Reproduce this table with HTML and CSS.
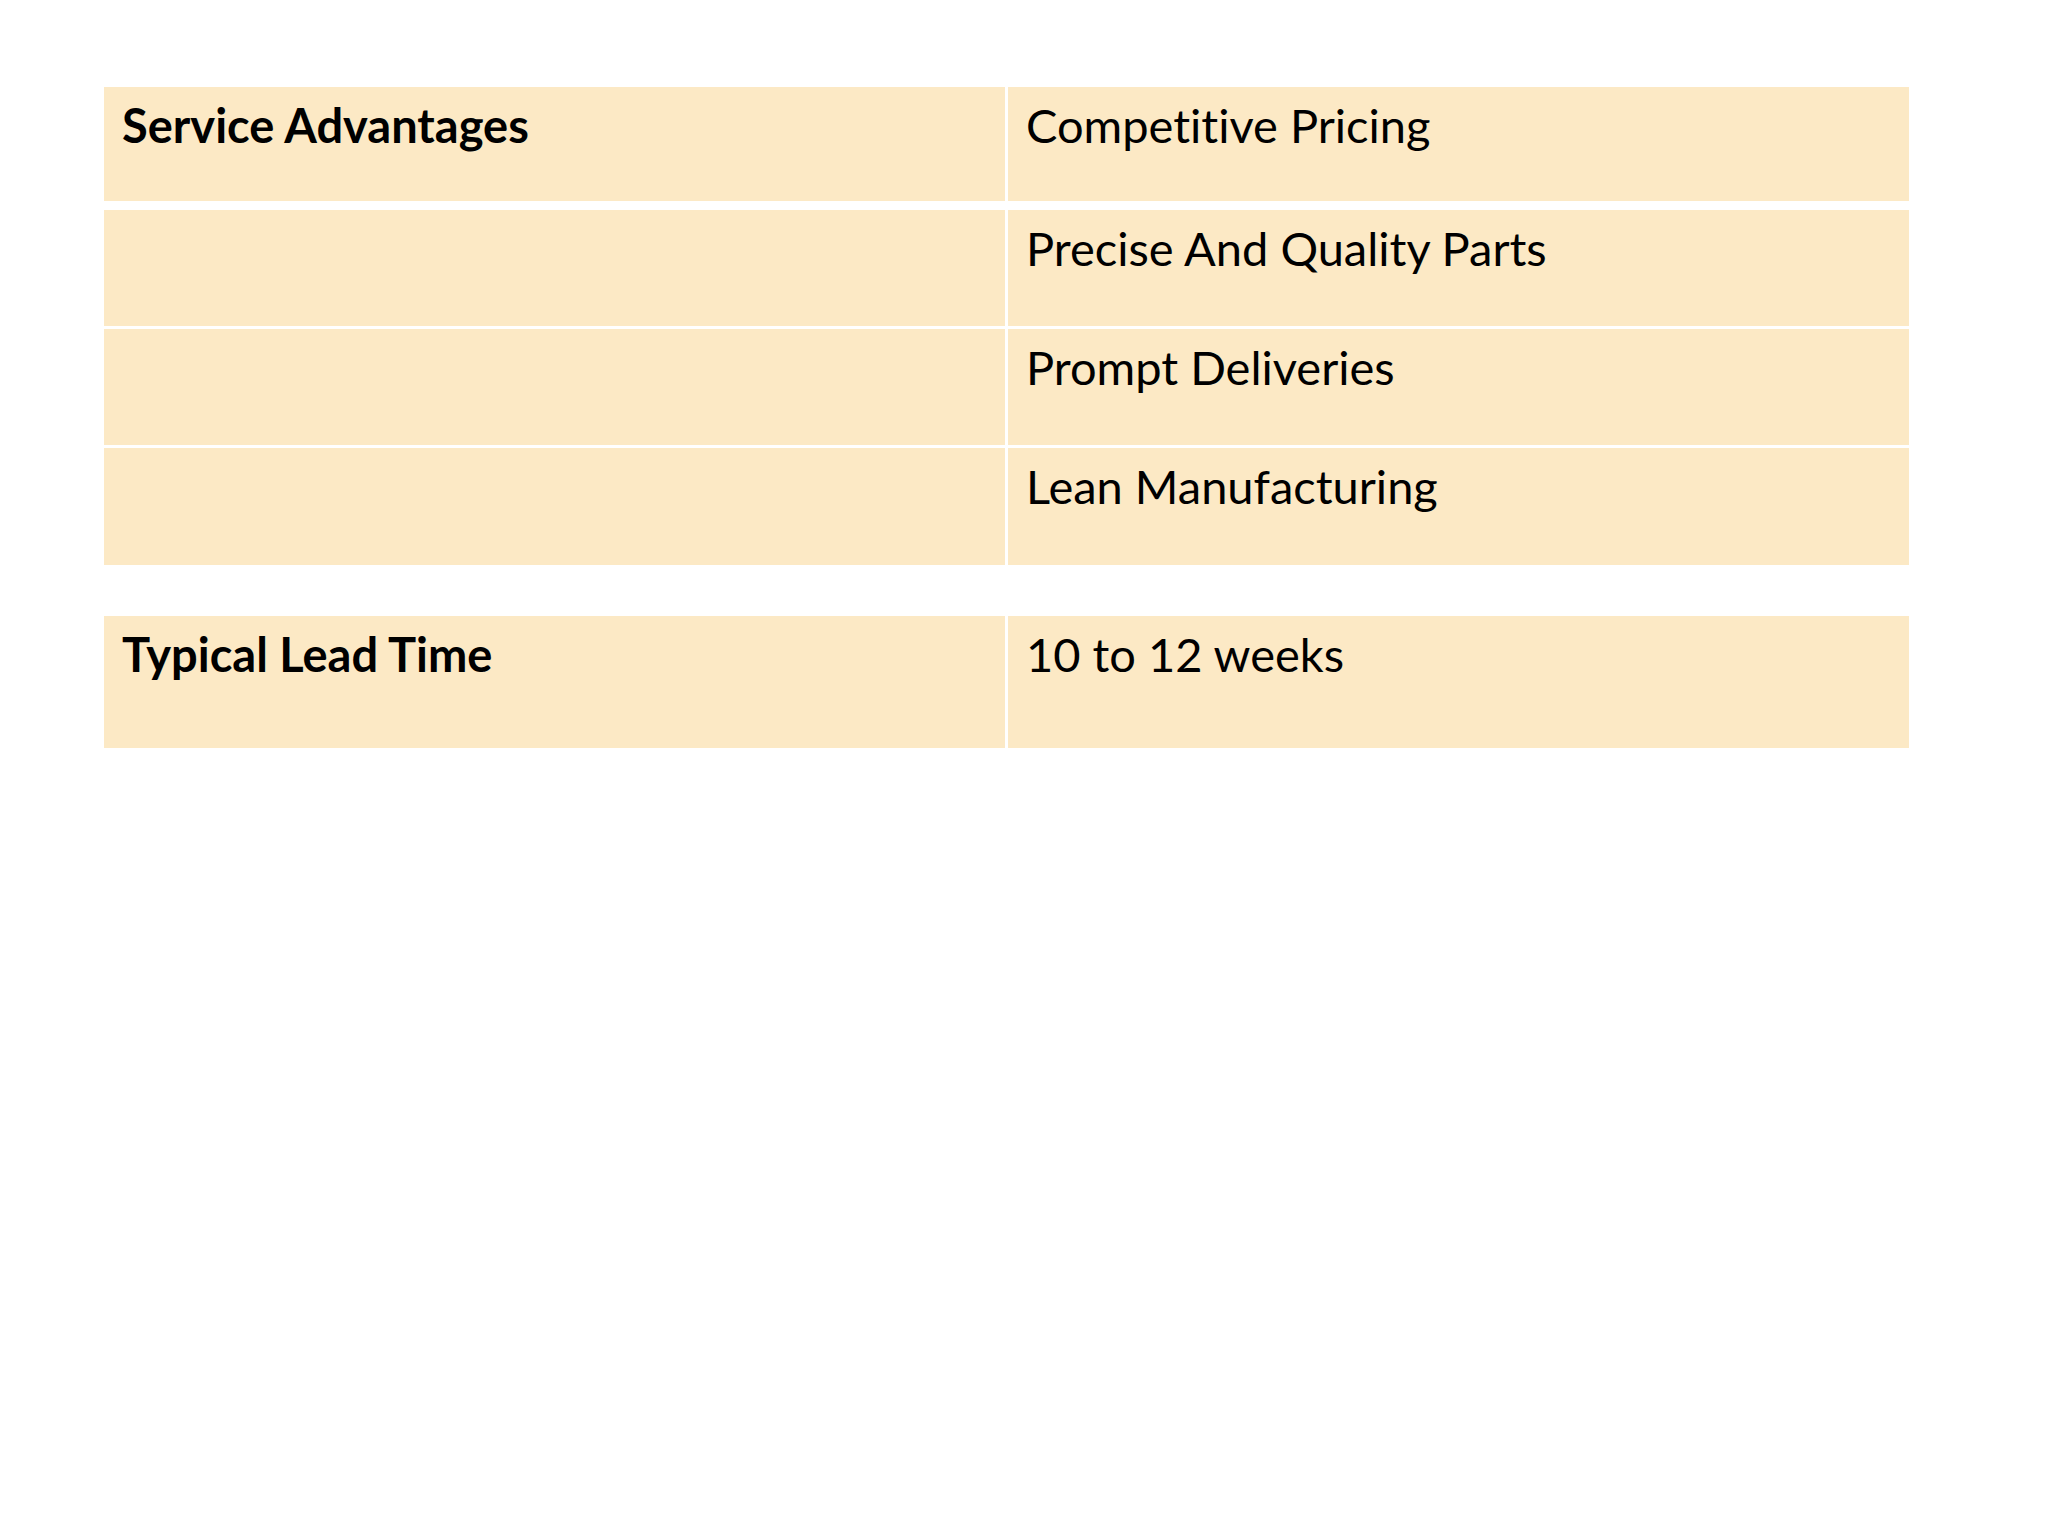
FILE: index.html
```html
<!DOCTYPE html>
<html lang="en">
<head>
<meta charset="utf-8">
<title>Service Advantages</title>
<link rel="stylesheet" href="styles.css">
</head>
<body>
<main class="page">
  <section class="table table-advantages">
    <div class="cell head first">Service Advantages</div>
    <div class="cell first">Competitive Pricing</div>
    <div class="cell head"></div>
    <div class="cell">Precise And Quality Parts</div>
    <div class="cell head"></div>
    <div class="cell">Prompt Deliveries</div>
    <div class="cell head"></div>
    <div class="cell">Lean Manufacturing</div>
  </section>
  <section class="table table-lead">
    <div class="cell head">Typical Lead Time</div>
    <div class="cell">10 to 12 weeks</div>
  </section>
</main>
</body>
</html>
```
FILE: styles.css
```css
html, body {
  margin: 0;
  padding: 0;
  background: #ffffff;
}

body {
  width: 2048px;
  height: 1536px;
  font-family: "Lato", "Open Sans", sans-serif;
  color: #000000;
}

.page {
  padding: 87px 0 0 104px;
}

.table {
  width: 1805px;
  display: grid;
  grid-template-columns: 1fr 1fr;
  column-gap: 3px;
  row-gap: 3px;
}

.table-advantages {
  grid-template-rows: 120px 116px 116px 117px;
}

.table-advantages .first {
  margin-bottom: 6px;
}

.table-lead {
  margin-top: 51px;
  grid-template-rows: 132px;
}

.cell {
  background: #fce9c5;
  padding: 10px 18px 0 18px;
  font-size: 47px;
  line-height: 56px;
  font-weight: 400;
  white-space: nowrap;
  font-variant-ligatures: none;
}

.cell.head {
  font-weight: 700;
}
```
